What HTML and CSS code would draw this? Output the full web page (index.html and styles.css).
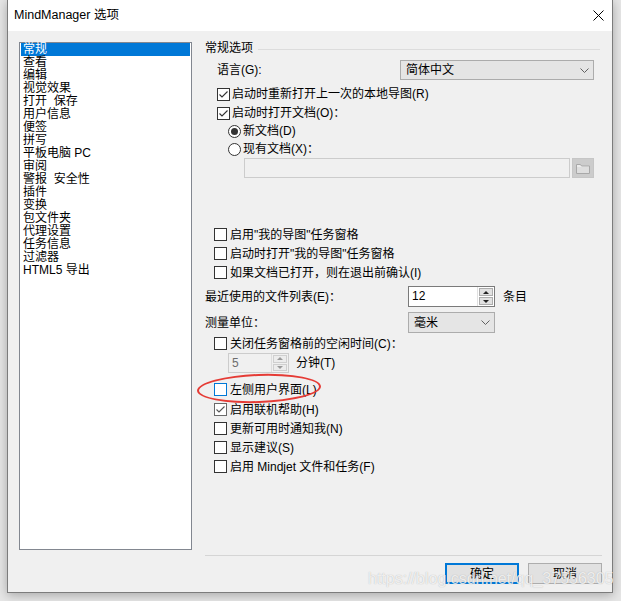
FILE: index.html
```html
<!DOCTYPE html>
<html lang="zh-CN">
<head>
<meta charset="utf-8">
<title>MindManager 选项</title>
<link rel="stylesheet" href="styles.css">
</head>
<body>
<div class="window">
  <div class="titlebar">
    <span class="title">MindManager 选项</span>
    <svg class="close" width="11" height="11" viewBox="0 0 11 11"><path d="M0.5 0.5L10.5 10.5M10.5 0.5L0.5 10.5" stroke="#000" stroke-width="1"/></svg>
  </div>
  <div class="content">
    <ul class="list">
      <li class="sel">常规</li>
      <li>查看</li>
      <li>编辑</li>
      <li>视觉效果</li>
      <li>打开&nbsp;&nbsp;保存</li>
      <li>用户信息</li>
      <li>便签</li>
      <li>拼写</li>
      <li>平板电脑 PC</li>
      <li>审阅</li>
      <li>警报&nbsp;&nbsp;安全性</li>
      <li>插件</li>
      <li>变换</li>
      <li>包文件夹</li>
      <li>代理设置</li>
      <li>任务信息</li>
      <li>过滤器</li>
      <li>HTML5 导出</li>
    </ul>
    <div class="panel">
      <div class="group-head"><span>常规选项</span><span class="head-line"></span></div>

      <div class="row h20 mt5 in12">
        <span>语言(G):</span>
        <div class="select lang"><span>简体中文</span><svg class="chev" width="9" height="5" viewBox="0 0 9 5"><path d="M0.5 0.5L4.5 4.5L8.5 0.5" fill="none" stroke="#606060"/></svg></div>
      </div>

      <div class="row h18 mt5 in12"><span class="cb"><svg width="11" height="11" viewBox="0 0 11 11"><path d="M1.5 5.5L4 8L9.5 2.5" fill="none" stroke="#333" stroke-width="1.1"/></svg></span><span>启动时重新打开上一次的本地导图(R)</span></div>
      <div class="row h18 mt1 in12"><span class="cb"><svg width="11" height="11" viewBox="0 0 11 11"><path d="M1.5 5.5L4 8L9.5 2.5" fill="none" stroke="#333" stroke-width="1.1"/></svg></span><span>启动时打开文档(O)：</span></div>
      <div class="row h18 in23"><span class="rb on"></span><span>新文档(D)</span></div>
      <div class="row h18 in23"><span class="rb"></span><span>现有文档(X)：</span></div>
      <div class="row h20 in39">
        <div class="textbox disabled"></div>
        <div class="folder-btn"><svg width="14" height="11" viewBox="0 0 14 11"><path d="M0.5 1.5h4l1 1.5h8v7.5h-13z" fill="#ececec" stroke="#a8a8a8"/><rect x="1" y="4" width="12" height="6" fill="#dedede"/></svg></div>
      </div>

      <div class="row h19 mt47 in9"><span class="cb"></span><span>启用"我的导图"任务窗格</span></div>
      <div class="row h19 in9"><span class="cb"></span><span>启动时打开"我的导图"任务窗格</span></div>
      <div class="row h19 in9"><span class="cb"></span><span>如果文档已打开，则在退出前确认(I)</span></div>

      <div class="row h21 mt4">
        <span class="label-col">最近使用的文件列表(E)：</span>
        <div class="spin">
          <div class="spin-input">12</div>
          <div class="spin-btns"><span class="up"></span><span class="down"></span></div>
        </div>
        <span class="unit">条目</span>
      </div>
      <div class="row h21 mt5">
        <span class="label-col">测量单位：</span>
        <div class="select unit-sel"><span>毫米</span><svg class="chev" width="9" height="5" viewBox="0 0 9 5"><path d="M0.5 0.5L4.5 4.5L8.5 0.5" fill="none" stroke="#606060"/></svg></div>
      </div>
      <div class="row h19 mt1 in9"><span class="cb"></span><span>关闭任务窗格前的空闲时间(C)：</span></div>
      <div class="row h20 in23">
        <div class="spin small disabled">
          <div class="spin-input">5</div>
          <div class="spin-btns"><span class="up"></span><span class="down"></span></div>
        </div>
        <span class="unit2">分钟(T)</span>
      </div>

      <div class="row h19 mt7 in9 annotated"><span class="cb focus"></span><span>左侧用户界面(L)</span><span class="ring"></span></div>
      <div class="row h19 mt1 in9"><span class="cb gray"><svg width="11" height="11" viewBox="0 0 11 11"><path d="M1.5 5.5L4 8L9.5 2.5" fill="none" stroke="#555" stroke-width="1.1"/></svg></span><span>启用联机帮助(H)</span></div>
      <div class="row h19 in9"><span class="cb"></span><span>更新可用时通知我(N)</span></div>
      <div class="row h19 in9"><span class="cb"></span><span>显示建议(S)</span></div>
      <div class="row h19 in9"><span class="cb"></span><span>启用 Mindjet 文件和任务(F)</span></div>

      <div class="spacer"></div>
      <div class="sep"></div>
      <div class="buttons">
        <div class="btn default">确定</div>
        <div class="btn">取消</div>
      </div>
    </div>
  </div>
  <div class="watermark">https://blog.csdn.net/qq_37556305</div>
</div>
</body>
</html>
```

FILE: styles.css
```css
* { box-sizing: border-box; }

html, body {
  margin: 0;
  padding: 0;
}

body {
  width: 621px;
  height: 601px;
  overflow: hidden;
  background: #e6e6e6;
  font-family: "Liberation Sans", "Noto Sans CJK SC", sans-serif;
  font-size: 12px;
  color: #000;
}

.window {
  position: relative;
  margin-left: 7px;
  width: 606px;
  height: 593px;
  border: 1px solid #7c7c7c;
  border-top: none;
  background: #f0f0f0;
  box-shadow: 0 2px 10px rgba(0, 0, 0, 0.28);
}

.titlebar {
  height: 31px;
  background: #fff;
  display: flex;
  align-items: center;
  justify-content: space-between;
  padding: 0 8px 1px 6px;
}

.title {
  font-size: 12.5px;
  line-height: 15px;
  padding-top: 1px;
}

.close { display: block; }

.content {
  display: flex;
  align-items: flex-start;
  padding: 11px 0 0 11px;
}

.list {
  width: 173px;
  height: 508px;
  margin: 0;
  padding: 0 1px;
  list-style: none;
  background: #fff;
  border: 1px solid #828790;
  flex: none;
}

.list li {
  height: 13px;
  line-height: 13px;
  padding-left: 2px;
  white-space: nowrap;
}

.list li.sel {
  background: #0078d7;
  color: #fff;
}

.panel {
  margin-left: 13px;
  width: 397px;
  height: 542px;
  display: flex;
  flex-direction: column;
  flex: none;
}

.group-head {
  height: 13px;
  line-height: 13px;
  display: flex;
  align-items: center;
  flex: none;
}

.head-line {
  flex: 1;
  height: 1px;
  background: #dcdcdc;
  margin: 1px 2px 0 5px;
}

.row {
  display: flex;
  align-items: center;
  flex: none;
  white-space: nowrap;
  line-height: 14px;
}

.h18 { height: 18px; }
.h19 { height: 19px; }
.h20 { height: 20px; }
.h21 { height: 21px; }

.mt1 { margin-top: 1px; }
.mt4 { margin-top: 4px; }
.mt5 { margin-top: 5px; }
.mt7 { margin-top: 7px; }
.mt47 { margin-top: 47px; }

.in9 { padding-left: 9px; }
.in12 { padding-left: 12px; }
.in23 { padding-left: 23px; }
.in39 { padding-left: 39px; }

.cb {
  width: 13px;
  height: 13px;
  border: 1px solid #333;
  background: #fff;
  flex: none;
  margin-right: 2px;
  display: flex;
  align-items: center;
  justify-content: center;
}
.cb svg { display: block; }
.cb.focus { border-color: #0078d7; }
.cb.gray { border-color: #6a6a6a; }
.in9 .cb { margin-right: 3px; }

.rb {
  width: 13px;
  height: 13px;
  border: 1px solid #333;
  border-radius: 50%;
  background: #fff;
  flex: none;
  margin-right: 2px;
  display: flex;
  align-items: center;
  justify-content: center;
}
.rb.on::after {
  content: "";
  width: 7px;
  height: 7px;
  border-radius: 50%;
  background: #333;
}

.select {
  height: 20px;
  background: #e5e5e5;
  border: 1px solid #acacac;
  display: flex;
  align-items: center;
  justify-content: space-between;
  padding: 0 4px 0 5px;
}
.select .chev { display: block; }
.select.lang {
  width: 194px;
  margin-left: auto;
  margin-right: 8px;
}
.select.unit-sel { width: 87px; height: 21px; }

.textbox {
  width: 326px;
  height: 20px;
  border: 1px solid #cccccc;
  background: #f0f0f0;
}

.folder-btn {
  width: 22px;
  height: 20px;
  margin-left: 2px;
  background: #cccccc;
  border: 1px solid #c6c6c6;
  display: flex;
  align-items: center;
  justify-content: center;
}

.label-col { width: 203px; flex: none; }

.spin {
  display: flex;
  height: 21px;
  border: 1px solid #7a7a7a;
  background: #fff;
}
.spin-input {
  width: 69px;
  padding-left: 3px;
  line-height: 19px;
  border-right: 1px solid #e0e0e0;
}
.spin-btns {
  width: 16px;
  display: flex;
  flex-direction: column;
  gap: 1px;
  padding: 1px;
}
.spin-btns span {
  flex: 1;
  background: #e1e1e1;
  border: 1px solid #adadad;
  display: flex;
  align-items: center;
  justify-content: center;
}
.spin-btns .up::after {
  content: "";
  border-left: 3px solid transparent;
  border-right: 3px solid transparent;
  border-bottom: 3px solid #222;
}
.spin-btns .down::after {
  content: "";
  border-left: 3px solid transparent;
  border-right: 3px solid transparent;
  border-top: 3px solid #222;
}

.spin.small {
  height: 20px;
  border-color: #cccccc;
  background: #f0f0f0;
}
.spin.small .spin-input {
  width: 43px;
  line-height: 18px;
  color: #6d6d6d;
  border-right-color: #dddddd;
}
.spin.small .spin-btns span {
  background: #ececec;
  border-color: #cfcfcf;
}
.spin.small .spin-btns .up::after { border-bottom-color: #9a9a9a; }
.spin.small .spin-btns .down::after { border-top-color: #9a9a9a; }

.unit { margin-left: 8px; }
.unit2 { margin-left: 7px; }

.annotated { position: relative; }
.ring {
  position: absolute;
  left: -8px;
  top: -6px;
  width: 124px;
  height: 29px;
  border: 2px solid #e53b35;
  border-radius: 50%;
  transform: rotate(-2deg);
}

.spacer { flex: 1; }

.sep {
  height: 1px;
  background: #d5d5d5;
  flex: none;
}

.buttons {
  display: flex;
  justify-content: flex-end;
  gap: 9px;
  margin-top: 7px;
  flex: none;
}

.btn {
  width: 74px;
  height: 21px;
  background: #e1e1e1;
  border: 1px solid #adadad;
  display: flex;
  align-items: center;
  justify-content: center;
  line-height: 14px;
}
.btn.default { border: 2px solid #0078d7; }

.watermark {
  position: absolute;
  left: 360px;
  top: 571px;
  font-family: "Liberation Sans", sans-serif;
  font-size: 16px;
  line-height: 16px;
  color: rgba(255, 255, 255, 0.8);
  text-shadow: 0 0 1px rgba(90, 90, 90, 0.45);
  white-space: nowrap;
}
```
